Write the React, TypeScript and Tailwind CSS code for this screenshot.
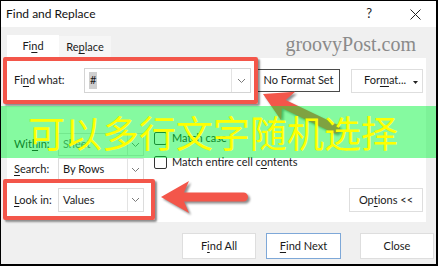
import React from "react";

function Chevron() {
  return (
    <svg width="9" height="6" viewBox="0 0 9 6" className="block">
      <polyline points="1,1 4.5,4.5 8,1" fill="none" stroke="#7a7a7a" strokeWidth="1" />
    </svg>
  );
}

function Select({ value, w = 86, h = 23, dim = false }: { value: string; w?: number; h?: number; dim?: boolean }) {
  return (
    <div
      className={`flex items-stretch bg-white border border-[#dcdcdc] ${dim ? "text-[#6d6d6d]" : "text-[#1a1a1a]"}`}
      style={{ width: w, height: h }}
    >
      <div className="flex-1 flex items-center pl-[4px]">{value}</div>
      <div className="w-[16px] border-l border-[#e3e3e3] flex items-center justify-center">
        <Chevron />
      </div>
    </div>
  );
}

function Check({ children }: { children: React.ReactNode }) {
  return (
    <div className="flex items-center h-[13px]">
      <div className="w-[13px] h-[13px] border border-[#333] rounded-[2px] bg-white" />
      <span className="ml-[5px]">{children}</span>
    </div>
  );
}

function Arrow({ tx, ty, angle, len }: { tx: number; ty: number; angle: number; len: number }) {
  const t = 4.5;
  const d = `M0,0 L28,-16 L23,-${t} L${len - t},-${t} A${t},${t} 0 0 1 ${len - t},${t} L23,${t} L28,16 Z`;
  return <path d={d} fill="#f3564a" transform={`translate(${tx},${ty}) rotate(${angle})`} />;
}

export default function App() {
  return (
    <div className="relative w-[438px] h-[266px] overflow-hidden bg-[#f0f0f0] border-l border-t border-r-2 border-b-2 border-black flex flex-col text-[11px] text-[#1a1a1a] font-['Lato','Noto_Sans_CJK_SC',sans-serif]">
      {/* title bar */}
      <div className="h-[26px] bg-white flex items-center pl-[5px] shrink-0">
        <span className="text-[12px] text-[#111]">Find and Replace</span>
        <span className="ml-auto text-[13px] text-[#222] mr-[38px]">?</span>
        <svg width="11" height="11" viewBox="0 0 11 11" className="mr-[15px]">
          <path d="M0.5,0.5 L10.5,10.5 M10.5,0.5 L0.5,10.5" stroke="#222" strokeWidth="1" />
        </svg>
      </div>

      {/* tabs */}
      <div className="h-[31px] flex items-end pl-[6px] shrink-0">
        <div className="w-[52px] h-[23px] bg-white flex items-center justify-center">
          Fi<u className="underline-offset-2">n</u>d
        </div>
        <div className="w-[52px] h-[22px] bg-[#f6f6f6] flex items-center justify-center">
          Re<u className="underline-offset-2">p</u>lace
        </div>
        <div className="ml-auto mr-[20px] self-center mt-[2px] text-[20px] leading-none text-[#8a8a8a] font-['Liberation_Serif',serif]">
          groovyPost.com
        </div>
      </div>

      {/* panel */}
      <div className="ml-[6px] w-[419px] h-[164px] bg-white pl-[7px] pt-[10px] flex flex-col shrink-0">
        <div className="flex items-center h-[25px]">
          <div className="w-[70px]">
            Fi<u className="underline-offset-2">n</u>d what:
          </div>
          <div className="w-[167px] h-[25px] border border-[#d4d4d4] flex items-stretch">
            <div className="flex-1 flex items-center pl-[4px]">
              <span className="bg-[#cfcfcf] px-[1px]">#</span>
            </div>
            <div className="w-[19px] border-l border-[#e3e3e3] flex items-center justify-center">
              <Chevron />
            </div>
          </div>
          <div className="ml-[6px] w-[83px] h-[23px] border border-[#4a4a4a] bg-white flex items-center justify-center">
            No Format Set
          </div>
          <div className="ml-[11px] w-[72px] h-[24px] border border-[#dedede] bg-white flex items-center justify-center relative">
            <span className="-ml-[4px]">
              For<u className="underline-offset-2">m</u>at...
            </span>
            <svg width="5" height="3" viewBox="0 0 5 3" className="absolute right-[4px] top-[11px]">
              <path d="M0,0 L5,0 L2.5,3 Z" fill="#222" />
            </svg>
          </div>
        </div>

        <div className="flex mt-[40px]">
          <div className="flex flex-col w-[130px]">
            <div className="flex items-center">
              <div className="w-[44px]">
                Wit<u className="underline-offset-2">h</u>in:
              </div>
              <Select value="Sheet" dim />
            </div>
            <div className="flex items-center mt-[2px]">
              <div className="w-[44px]">
                <u className="underline-offset-2">S</u>earch:
              </div>
              <Select value="By Rows" />
            </div>
            <div className="flex items-center mt-[7px]">
              <div className="w-[44px]">
                <u className="underline-offset-2">L</u>ook in:
              </div>
              <Select value="Values" h={24} />
            </div>
          </div>
          <div className="flex flex-col ml-[10px] -mt-[1px] flex-1">
            <Check>Match case</Check>
            <div className="mt-[11px]">
              <Check>
                Match entire cell c<u className="underline-offset-2">o</u>ntents
              </Check>
            </div>
            <div className="mt-[19px] ml-auto mr-[3px] w-[74px] h-[24px] border border-[#dedede] bg-white flex items-center justify-center">
              Op<u className="underline-offset-2">t</u>ions &lt;&lt;
            </div>
          </div>
        </div>
      </div>

      {/* bottom buttons */}
      <div className="flex justify-end mt-[11px] pr-[2px] gap-[10px]">
        <div className="w-[74px] h-[26px] border border-[#dedede] bg-white flex items-center justify-center">
          F<u className="underline-offset-2">i</u>nd All
        </div>
        <div className="w-[75px] h-[26px] border border-[#7ea8d8] bg-white flex items-center justify-center">
          <u className="underline-offset-2">F</u>ind Next
        </div>
        <div className="ml-[9px] w-[74px] h-[26px] border border-[#dedede] bg-white flex items-center justify-center">
          Close
        </div>
      </div>

      {/* annotations */}
      <div className="absolute left-[2px] top-[56px] w-[255px] h-[47px] border-[4px] border-[#f3564a] rounded-[2px] shadow-[2px_2px_2px_rgba(0,0,0,0.45)]" />
      <div className="absolute left-[2px] top-[178px] w-[152px] h-[41px] border-[4px] border-[#f3564a] rounded-[2px] shadow-[2px_2px_2px_rgba(0,0,0,0.45)]" />
      <svg width="438" height="266" className="absolute -left-[1px] -top-[1px] pointer-events-none drop-shadow-[2px_2px_1px_rgba(0,0,0,0.45)]">
        <Arrow tx={263} ty={94} angle={25.7} len={85} />
        <Arrow tx={161} ty={197} angle={0} len={87} />
      </svg>
      <div className="absolute -left-[1px] top-[105px] w-[440px] h-[52px] bg-[rgba(0,245,56,0.48)] flex items-center pl-[28px]">
        <span className="text-[37px] leading-none text-[#ffff00] font-['Noto_Sans_CJK_SC',sans-serif]">
          可以多行文字随机选择
        </span>
      </div>
    </div>
  );
}
